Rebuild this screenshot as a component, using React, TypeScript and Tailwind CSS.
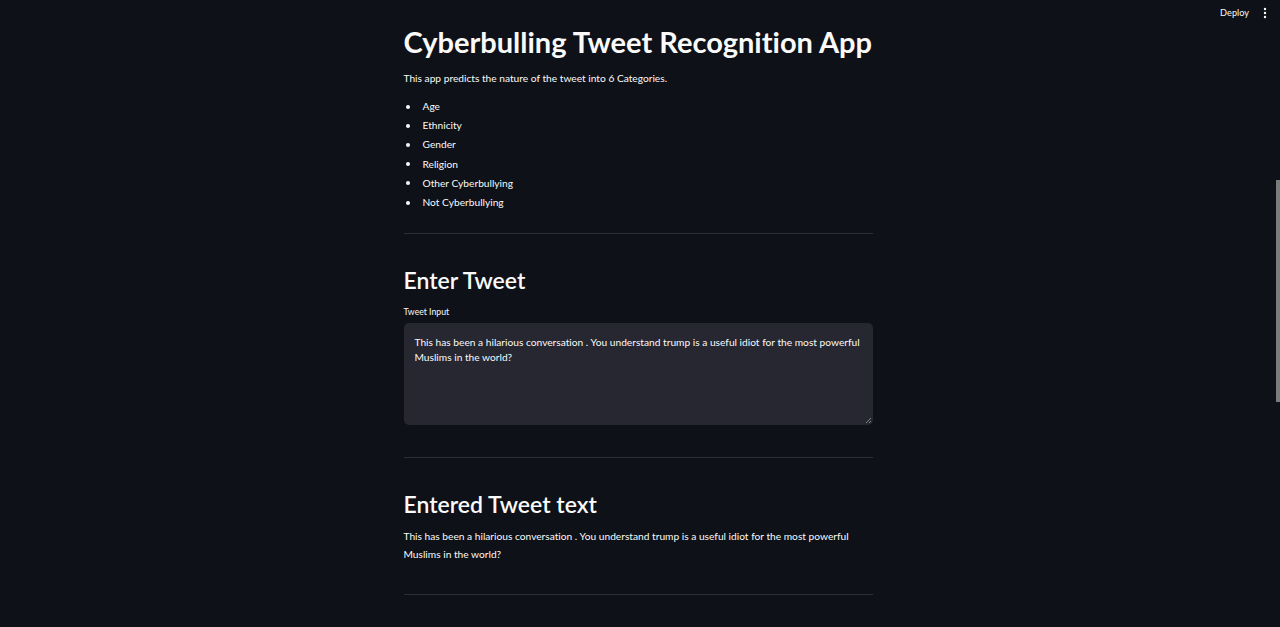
import React from "react";

const font = { fontFamily: '"Source Sans Pro", "Lato", "Noto Sans", sans-serif' };

function Hr() {
  return <div className="h-px w-full bg-[#2c2f36]" />;
}

export default function App() {
  const items = ["Age", "Ethnicity", "Gender", "Religion", "Other Cyberbullying", "Not Cyberbullying"];
  const tweet =
    "This has been a hilarious conversation . You understand trump is a useful idiot for the most powerful Muslims in the world?";
  return (
    <div className="relative h-[627px] w-full overflow-hidden bg-[#0e1117] text-[#fafafa] [font-variant-ligatures:none]" style={font}>
      <div className="absolute right-0 top-0 flex h-[26px] items-center gap-[14px] pr-[13px]">
        <span className="text-[9.2px] font-normal text-[#fafafa]">Deploy</span>
        <svg width="4" height="12" viewBox="0 0 4 12" fill="#fafafa">
          <circle cx="2" cy="2" r="1.2" />
          <circle cx="2" cy="6" r="1.2" />
          <circle cx="2" cy="10" r="1.2" />
        </svg>
      </div>
      <div className="absolute right-0 top-[180px] h-[222px] w-[4px] bg-[#7b7b7b]" />
      <div className="flex justify-center pr-[4px]">
        <div className="w-[469px] pt-[23px]">
          <h1 className="whitespace-nowrap text-[29px] font-bold leading-[38px]">Cyberbulling Tweet Recognition App</h1>
          <p className="mt-[9px] text-[10.2px] leading-[17px]">This app predicts the nature of the tweet into 6 Categories.</p>
          <ul className="mt-[10px] text-[10.2px] leading-[17px]">
            {items.map((it) => (
              <li key={it} className="flex h-[19.2px] items-center">
                <span className="ml-[2px] mr-[13px] h-[4px] w-[4px] rounded-full bg-[#fafafa]" />
                <span>{it}</span>
              </li>
            ))}
          </ul>
          <div className="mt-[21px]">
            <Hr />
          </div>
          <h2 className="mt-[31px] text-[23px] font-semibold leading-[30px]">Enter Tweet</h2>
          <div className="mt-[11px] text-[8.7px] leading-[12px]">Tweet Input</div>
          <div className="relative mt-[5px] h-[102px] w-full rounded-[5px] bg-[#262730] px-[11px] pt-[12px] text-[10.2px] leading-[15px]">
            {tweet}
            <svg className="absolute bottom-[2px] right-[2px]" width="6" height="6" viewBox="0 0 6 6" stroke="#9a9ca3" strokeWidth="0.8">
              <line x1="1" y1="6" x2="6" y2="1" />
              <line x1="4" y1="6" x2="6" y2="4" />
            </svg>
          </div>
          <div className="mt-[32px]">
            <Hr />
          </div>
          <h2 className="mt-[31px] text-[23px] font-semibold leading-[30px]">Entered Tweet text</h2>
          <p className="mt-[9px] w-[450px] text-[10.2px] leading-[17.5px]">{tweet}</p>
          <div className="mt-[31px]">
            <Hr />
          </div>
        </div>
      </div>
    </div>
  );
}
